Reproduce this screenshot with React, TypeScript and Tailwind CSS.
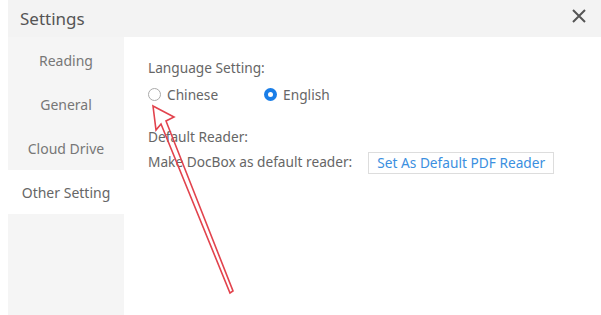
const menuItems = ["Reading", "General", "Cloud Drive", "Other Setting"];
const selected = "Other Setting";

function Arrow() {
  // red annotation arrow drawn on top of the dialog
  return (
    <svg
      className="pointer-events-none absolute left-0 top-0"
      width="601"
      height="315"
      viewBox="0 0 601 315"
    >
      <polygon
        points="153,106 174,117 166,121 233,291 230,293 161,124 156,130"
        fill="none"
        stroke="#e2434d"
        strokeWidth="1.6"
        strokeLinejoin="miter"
      />
    </svg>
  );
}

export default function App() {
  return (
    <div
      className="relative h-[315px] w-[601px] overflow-hidden bg-white pl-2 text-[13.7px] text-[#666]"
      style={{ fontFamily: '"Noto Sans", "Open Sans", sans-serif' }}
    >
      <div className="flex h-[37px] items-center justify-between bg-[#f3f3f3] pl-3 pr-[15px]">
        <span className="text-[17px] text-[#555]">Settings</span>
        <svg width="14" height="14" viewBox="0 0 14 14" className="-mt-[6px]">
          <path d="M1 1 L13 13 M13 1 L1 13" stroke="#555" strokeWidth="2" />
        </svg>
      </div>

      <div className="flex h-[278px]">
        <ul className="w-[116px] bg-[#f5f5f5] pt-px text-[14px]">
          {menuItems.map((item) => (
            <li
              key={item}
              className={`flex h-[44px] items-center justify-center ${
                item === selected ? "bg-white text-[#666]" : "text-[#777]"
              }`}
            >
              {item}
            </li>
          ))}
        </ul>

        <div className="flex-1 pl-6 pt-[21px]">
          <p>Language Setting:</p>
          <div className="mt-[6px] flex items-center">
            <label className="flex items-center gap-[6px]">
              <span className="h-[13px] w-[13px] rounded-full border border-[#aaa] bg-white" />
              Chinese
            </label>
            <label className="ml-[46px] flex items-center gap-[6px]">
              <span className="flex h-[13px] w-[13px] items-center justify-center rounded-full bg-[#1a7ee8]">
                <span className="h-[5px] w-[5px] rounded-full bg-white" />
              </span>
              English
            </label>
          </div>

          <p className="mt-[22px]">Default Reader:</p>
          <div className="mt-[4px] flex items-center">
            <span>Make DocBox as default reader:</span>
            <button className="ml-[16px] h-[22px] border border-[#ddd] bg-white px-[8px] text-[13.7px] text-[#3b8fe0]">
              Set As Default PDF Reader
            </button>
          </div>
        </div>
      </div>

      <Arrow />
    </div>
  );
}
